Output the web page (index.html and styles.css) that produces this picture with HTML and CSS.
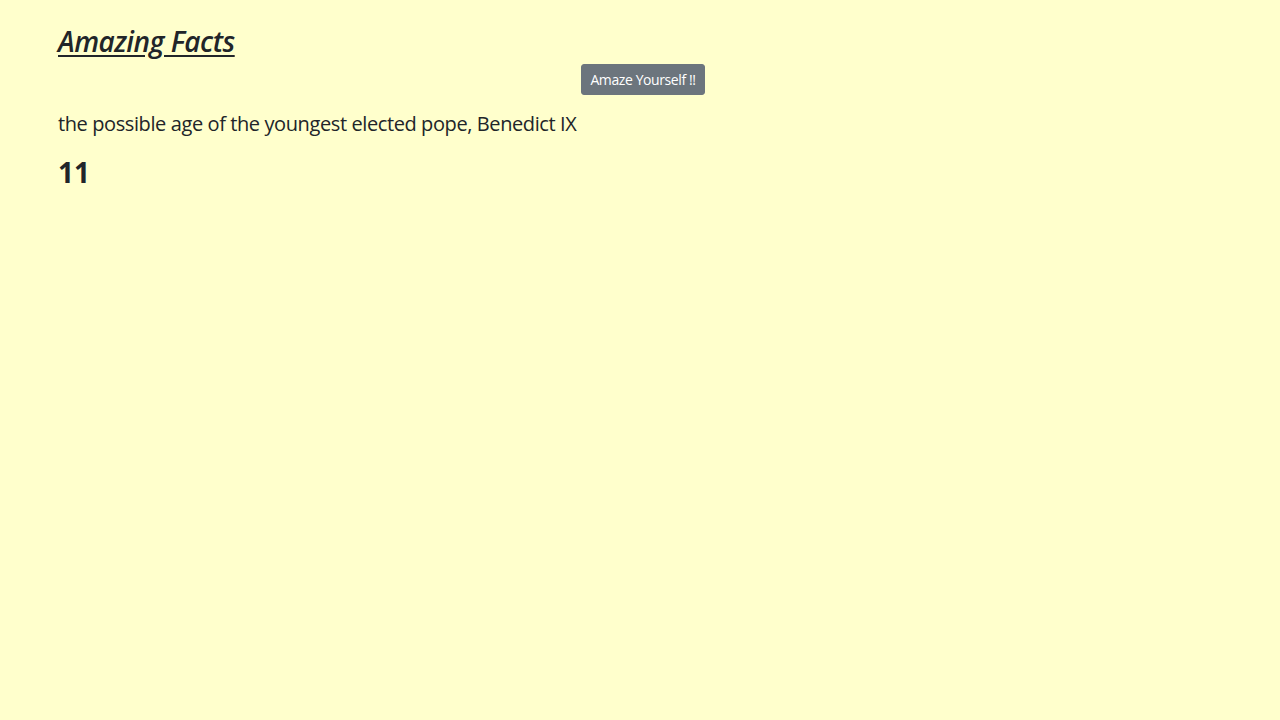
FILE: index.html
```html
<!DOCTYPE html>
<html lang="en">
<head>
<meta charset="utf-8">
<title>Amazing Facts</title>
<link rel="stylesheet" href="styles.css">
</head>
<body>
<main class="page">
  <h3 class="title">Amazing Facts</h3>
  <div class="actions">
    <button class="btn" type="button">Amaze Yourself !!</button>
  </div>
  <p class="fact">the possible age of the youngest elected pope, Benedict IX</p>
  <h3 class="number">11</h3>
</main>
</body>
</html>
```
FILE: styles.css
```css
html, body {
  margin: 0;
  padding: 0;
}
body {
  background: #ffffcc;
  color: #212529;
  font-family: "Open Sans", "Noto Sans", sans-serif;
}
.page {
  padding: 25px 52px 0 58px;
}
.title {
  margin: 0;
  font-size: 28px;
  line-height: 1.2;
  font-weight: 600;
  font-style: italic;
  letter-spacing: -0.5px;
  text-decoration: underline;
  text-underline-offset: 3px;
}
.actions {
  text-align: center;
  margin-top: 5px;
}
.btn {
  font-family: inherit;
  font-size: 14px;
  line-height: 21px;
  padding: 4px 8px;
  letter-spacing: -0.4px;
  color: #ffffff;
  background: #6c757d;
  border: 1px solid #6c757d;
  border-radius: 3px;
}
.fact {
  margin: 14px 0 0;
  font-size: 20px;
  line-height: 1.5;
  letter-spacing: -0.4px;
}
.number {
  margin: 17px 0 0;
  font-size: 28px;
  line-height: 1.2;
  font-weight: 700;
}
```
